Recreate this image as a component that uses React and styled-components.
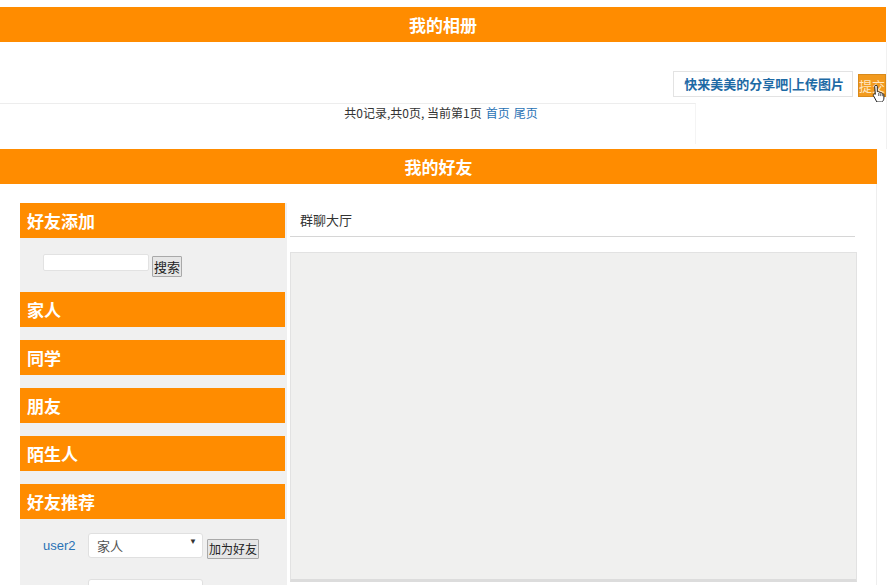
import React from "react";
import styled, { createGlobalStyle } from "styled-components";

const GlobalStyle = createGlobalStyle`
  html, body {
    margin: 0;
    padding: 0;
    background: #ffffff;
    font-family: "Liberation Sans", "Noto Sans CJK SC", sans-serif;
    font-size: 13px;
    color: #333;
  }
`;

const Page = styled.div`
  padding-top: 7px;
  width: 892px;
`;

const TitleBar = styled.div`
  width: ${(p) => p.width}px;
  height: 35px;
  line-height: 35px;
  background: #ff8c00;
  color: #ffffff;
  text-align: center;
  font-family: "Noto Sans CJK SC", sans-serif;
  font-weight: 700;
  font-size: 17px;
`;

const AlbumBody = styled.div`
  position: relative;
  height: 107px;
  width: 886px;
  border-right: 1px solid #f1f1f1;
  .ghost {
    position: absolute;
    left: 0;
    top: 61px;
    width: 695px;
    height: 40px;
    border-top: 1px solid #ededed;
    border-right: 1px solid #f4f4f4;
  }
`;

const UploadRow = styled.div`
  position: relative;
  display: flex;
  justify-content: flex-end;
  align-items: center;
  gap: 5px;
  padding-top: 29px;
`;

const UploadLabel = styled.div`
  height: 24px;
  line-height: 24px;
  padding: 0 8px 0 10px;
  border: 1px solid #e3e3e3;
  background: #ffffff;
  color: #1d6aa5;
  font-family: "Noto Sans CJK SC", sans-serif;
  font-weight: 700;
  font-size: 13px;
`;

const SubmitButton = styled.button`
  position: relative;
  width: 28px;
  height: 23px;
  margin-top: 3px;
  padding: 0;
  border: 1px solid #d98a1a;
  background: #f29a1e;
  color: #ffe7c2;
  font-family: "Noto Sans CJK SC", sans-serif;
  font-size: 13px;
  cursor: pointer;
  svg {
    position: absolute;
    left: 13px;
    top: 9px;
  }
`;

const Pager = styled.div`
  position: relative;
  margin-top: 7px;
  padding-right: 4px;
  text-align: center;
  font-family: "Noto Sans CJK SC", sans-serif;
  font-size: 12px;
  color: #333;
  a {
    color: #2a72b5;
    text-decoration: none;
    margin-left: 4px;
  }
`;

const FriendsBody = styled.div`
  display: flex;
  align-items: flex-start;
  width: 877px;
  padding: 19px 0 0 20px;
  box-sizing: border-box;
  border-right: 1px solid #eeeeee;
  min-height: 420px;
`;

const Sidebar = styled.div`
  width: 267px;
  background: #f0f0f0;
  flex-shrink: 0;
`;

const GroupHeader = styled.div`
  width: 265px;
  height: 35px;
  line-height: 35px;
  padding-left: 7px;
  box-sizing: border-box;
  background: #ff8c00;
  color: #ffffff;
  font-family: "Noto Sans CJK SC", sans-serif;
  font-weight: 700;
  font-size: 17px;
  margin-bottom: ${(p) => p.gap || 0}px;
`;

const SearchRow = styled.div`
  height: 54px;
  display: flex;
  align-items: flex-start;
  padding: 16px 0 0 23px;
  box-sizing: border-box;
  gap: 3px;
`;

const TextInput = styled.input`
  width: 106px;
  height: 17px;
  padding: 0 3px;
  box-sizing: border-box;
  border: 1px solid #e2e2e2;
  border-radius: 2px;
  background: #ffffff;
  outline: none;
`;

const PlainButton = styled.button`
  height: ${(p) => p.h || 21}px;
  margin-top: ${(p) => p.top || 0}px;
  padding: 0 1px;
  border: 1px solid #a9a9a9;
  border-radius: 1px;
  background: #e6e6e6;
  color: #222;
  font-family: "Noto Sans CJK SC", sans-serif;
  font-size: ${(p) => p.size || 13}px;
  line-height: 1;
`;

const Recommend = styled.div`
  padding: 14px 0 0 23px;
  height: 70px;
`;

const UserRow = styled.div`
  display: flex;
  align-items: center;
  height: 25px;
  margin-bottom: 21px;
`;

const UserName = styled.a`
  width: 45px;
  color: #2a72b5;
  font-family: "Liberation Sans", sans-serif;
  font-size: 13px;
  text-decoration: none;
`;

const SelectWrap = styled.div`
  position: relative;
  width: 115px;
  height: 25px;
  margin-right: 4px;
  margin-left: ${(p) => p.indent || 0}px;
  select {
    width: 100%;
    height: 100%;
    appearance: none;
    border: 1px solid #e0e0e0;
    border-radius: 3px;
    background: #ffffff;
    padding-left: 8px;
    color: #555;
    font-family: "Noto Sans CJK SC", sans-serif;
    font-size: 13px;
    outline: none;
  }
  span {
    position: absolute;
    right: 6px;
    top: 4px;
    font-size: 8px;
    color: #333;
    pointer-events: none;
  }
`;

const ChatColumn = styled.div`
  margin-left: 3px;
  width: 567px;
`;

const ChatTitle = styled.div`
  height: 34px;
  line-height: 34px;
  padding-left: 10px;
  box-sizing: border-box;
  border-bottom: 1px solid #d6d6d6;
  width: 565px;
  font-family: "Noto Sans CJK SC", sans-serif;
  font-size: 13px;
  color: #333;
`;

const ChatBox = styled.div`
  margin-top: 15px;
  height: 326px;
  background: #f0f0ef;
  border: 1px solid #e2e2e2;
  border-bottom: 3px solid #dcdcdc;
`;

const groups = ["家人", "同学", "朋友", "陌生人"];

const HandCursor = () => (
  <svg width="14" height="18" viewBox="0 0 14 18">
    <path
      d="M4 1.2c.8 0 1.3.6 1.3 1.3v5.2l.3-.1c.7-.2 1.3.2 1.5.7.6-.3 1.4-.1 1.7.6.6-.3 1.4 0 1.6.7l.1.2c.7-.2 1.4.3 1.4 1v3.3c0 1.8-1 3.3-2.2 3.900H4.9L1.6 12c-.5-.6-.5-1.4.1-1.8.5-.4 1.2-.3 1.600.1l-.6-7.8C2.7 1.8 3.3 1.2 4 1.2z"
      fill="#ffffff"
      stroke="#222"
      strokeWidth="1"
    />
    <path d="M6.8 9v3M8.8 9.3v2.8M10.8 10v2.2" stroke="#222" strokeWidth=".8" />
  </svg>
);

export default function App() {
  return (
    <Page>
      <GlobalStyle />
      <TitleBar width={886}>我的相册</TitleBar>
      <AlbumBody>
        <span className="ghost" />
        <UploadRow>
          <UploadLabel>快来美美的分享吧|上传图片</UploadLabel>
          <SubmitButton>
            提交
            <HandCursor />
          </SubmitButton>
        </UploadRow>
        <Pager>
          共0记录,共0页, 当前第1页<a href="#">首页</a>
          <a href="#">尾页</a>
        </Pager>
      </AlbumBody>

      <TitleBar width={877}>我的好友</TitleBar>
      <FriendsBody>
        <Sidebar>
          <GroupHeader>好友添加</GroupHeader>
          <SearchRow>
            <TextInput />
            <PlainButton top={2}>搜索</PlainButton>
          </SearchRow>
          {groups.map((g) => (
            <GroupHeader key={g} gap={13}>
              {g}
            </GroupHeader>
          ))}
          <GroupHeader>好友推荐</GroupHeader>
          <Recommend>
            <UserRow>
              <UserName href="#">user2</UserName>
              <SelectWrap>
                <select defaultValue="家人">
                  <option>家人</option>
                  <option>同学</option>
                  <option>朋友</option>
                  <option>陌生人</option>
                </select>
                <span>▼</span>
              </SelectWrap>
              <PlainButton h={20} top={7} size={12}>
                加为好友
              </PlainButton>
            </UserRow>
            <UserRow>
              <SelectWrap indent={45}>
                <select defaultValue="">
                  <option value=""></option>
                </select>
              </SelectWrap>
            </UserRow>
          </Recommend>
        </Sidebar>
        <ChatColumn>
          <ChatTitle>群聊大厅</ChatTitle>
          <ChatBox />
        </ChatColumn>
      </FriendsBody>
    </Page>
  );
}
